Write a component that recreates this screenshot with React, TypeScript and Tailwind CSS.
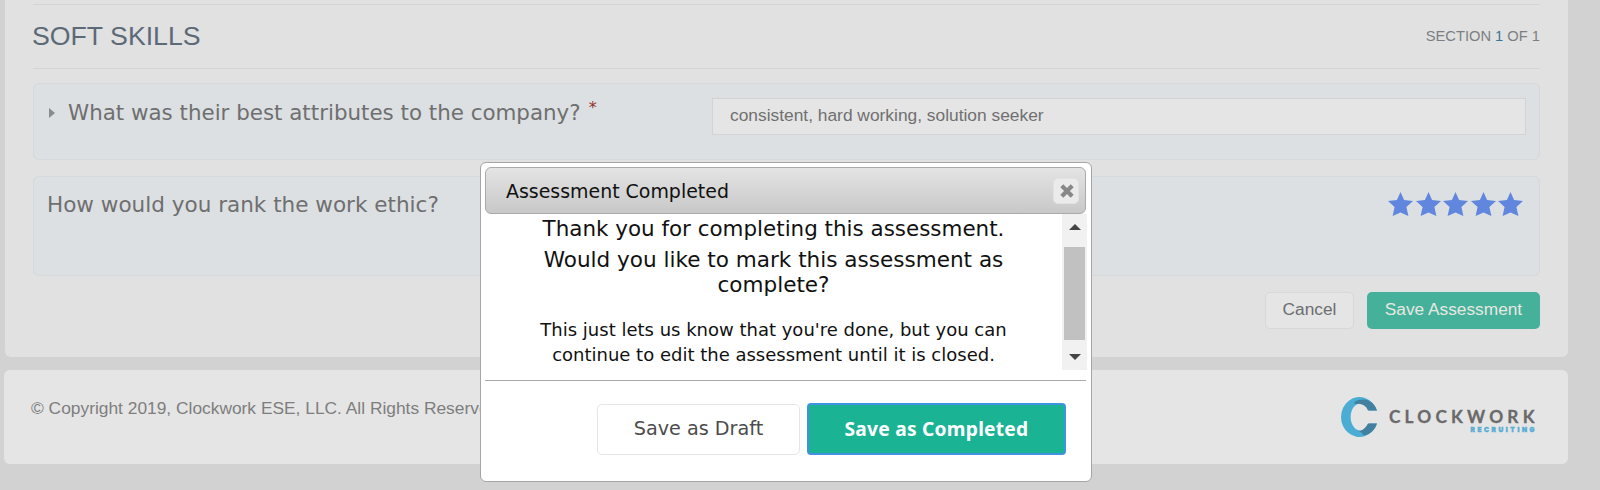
import type { ReactNode } from "react";

const Star = () => (
  <svg viewBox="0 0 25 24" className="h-6 w-[25px]" fill="#6086de">
    <path d="M12.500 0l3.600 8.100 8.900.9-6.600 6 2 9-7.900-3.400-7.900 3.400 2-9L0 9l8.900-.9z" />
  </svg>
);

const Logo = () => (
  <svg width="196" height="42" viewBox="0 0 196 42">
    <path
      d="M37.500 14.500A18.500 20 0 1 0 37.500 27.500L29.500 27.500A9.800 13.500 0 1 1 29.500 14.500Z"
      fill="#4bacd4"
      transform="translate(.5)"
    />
    <path d="M15.500 6C20 3 25.500 3 29.500 4.500C33.500 6.500 36.500 10 38 14.500L29 14.500C27 9.500 22.500 7 15.500 8Z" fill="#41809f" />
    <path
      d="M38 27.500C35.500 34.500 31 38.500 24.500 39.500C24 37.500 22 36 20 35.500C24 34 27 31.500 29 27.500Z"
      fill="#41809f"
    />
    <text
      x="50"
      y="26.500"
      fontFamily="Lato, sans-serif"
      fontSize="17.300"
      fontWeight="700"
      textLength="145.500"
      fill="#6a6a6a"
      stroke="#6a6a6a"
      strokeWidth="0.300"
    >
      CLOCKWORK
    </text>
    <text
      x="131.500"
      y="35.500"
      fontFamily="Inter, sans-serif"
      fontSize="6.500"
      fontWeight="900"
      textLength="64"
      fill="#55add3"
      stroke="#55add3"
      strokeWidth="0.400"
    >
      RECRUITING
    </text>
  </svg>
);

const Question = ({ className, children }: { className: string; children: ReactNode }) => (
  <div
    className={`flex items-start justify-between rounded-md border border-[#d3d9dc] bg-[#dce0e3] pr-[13px] pl-[13px] ${className}`}
  >
    {children}
  </div>
);

const Dialog = () => (
  <div className="absolute top-[162px] left-[480px] flex h-80 w-[612px] flex-col rounded-md border border-[#a5a5a5] bg-white py-1 pr-[5px] pl-1 font-['DejaVu_Sans',sans-serif] text-[#111]">
    <div className="flex h-[47px] shrink-0 items-center justify-between rounded-md border border-[#aaa] bg-linear-to-b from-[#e4e4e4] to-[#c8c8c8] pr-1.5 pl-5">
      <h2 className="text-[18.950px] leading-6">Assessment Completed</h2>
      <button className="flex h-[26px] w-[26px] items-center justify-center rounded-[5px] border border-[#e2e2e2] bg-[#ebebeb]">
        <svg width="14" height="14" viewBox="0 0 14 14" stroke="#888" strokeWidth="4.200" className="ml-0.5">
          <path d="M1.800 1.800l10.400 10.400M12.200 1.800L1.800 12.200" />
        </svg>
      </button>
    </div>

    <div className="-mr-px flex h-[156px] shrink-0">
      <div className="flex-1 overflow-hidden pt-[3px] text-center">
        <p className="text-[21.450px] leading-6">Thank you for completing this assessment.</p>
        <p className="mx-auto mt-1.5 w-[480px] text-[21.550px] leading-[25px]">
          Would you like to mark this assessment as complete?
        </p>
        <p className="mx-auto mt-5 w-[480px] text-[18px] leading-[25px]">
          This just lets us know that you're done, but you can continue to edit the assessment until it is closed.
        </p>
      </div>
      <div className="flex w-[25px] flex-col items-center bg-[#f1f1f1] pt-2.5">
        <svg width="12" height="6" viewBox="0 0 12 6" fill="#444">
          <path d="M0 6l6-6 6 6z" />
        </svg>
        <div className="mt-[17px] mb-3.5 h-[93px] w-[21px] bg-[#c1c1c1]" />
        <svg width="12" height="6" viewBox="0 0 12 6" fill="#444">
          <path d="M0 0h12L6 6z" />
        </svg>
      </div>
    </div>

    <div className="mt-2.5 flex justify-end gap-[7px] border-t border-[#aaa] pt-[22px] pr-5">
      <button className="mt-px h-[51px] w-[203px] rounded-[5px] border border-[#e3e6e6] bg-white text-[19.200px] text-[#4c4c4c]">
        Save as Draft
      </button>
      <button className="h-[52px] w-[259px] rounded border-2 border-[#3f93e0] bg-[#1ab394] font-['Noto_Sans',sans-serif] text-[19.200px] font-bold tracking-[0.240px] text-white">
        Save as Completed
      </button>
    </div>
  </div>
);

const App = () => {
  return (
    <div className="relative h-[490px] w-[1600px] overflow-hidden bg-[#d2d2d2] font-['Liberation_Sans',sans-serif]">
      <main className="ml-[5px] h-[357px] w-[1563px] rounded-b-md bg-[#e1e1e1] pt-1 pr-7 pl-7">
        <div className="flex h-[65px] items-center justify-between border-y border-[#d3d4d5]">
          <h1 className="-ml-px text-[26.700px] text-[#5c6a78]">SOFT SKILLS</h1>
          <span className="text-[14.700px] text-[#7b7f83]">
            SECTION <span className="text-[#35779a]">1</span> OF 1
          </span>
        </div>

        <Question className="mt-3.5 h-[77px] pt-3.5">
          <div className="flex items-center font-['DejaVu_Sans',sans-serif] text-[21.400px] leading-[29px] text-[#6f6f6f]">
            <svg width="6" height="10" viewBox="0 0 6 10" fill="#8b8b8b" className="mr-[13px] ml-0.5">
              <path d="M0 0l6 5-6 5z" />
            </svg>
            What was their best attributes to the company?
            <sup className="top-[-5px] ml-2 text-base leading-none text-[#96341f]">*</sup>
          </div>
          <div className="flex h-[37px] w-[814px] items-center border border-[#d0d4d7] bg-[#e5e5e5] pb-0.5 pl-[17px] text-[17.370px] text-[#707070]">
            consistent, hard working, solution seeker
          </div>
        </Question>

        <Question className="mt-4 h-[100px] pt-3.5">
          <span className="font-['DejaVu_Sans',sans-serif] text-[21.540px] leading-7 text-[#6f6f6f]">
            How would you rank the work ethic?
          </span>
          <div className="mt-px mr-[3px] flex gap-[2.400px]">
            <Star />
            <Star />
            <Star />
            <Star />
            <Star />
          </div>
        </Question>

        <div className="mt-4 flex justify-end gap-[13px] text-[17.300px]">
          <button className="h-[37px] w-[89px] rounded-[5px] border border-[#d6d8d9] bg-[#e5e5e5] pb-0.5 text-[#6b6e72]">
            Cancel
          </button>
          <button className="h-[37px] w-[173px] rounded-[5px] bg-[#45b19b] pb-0.5 text-[#e8e8e0]">
            Save Assessment
          </button>
        </div>
      </main>

      <footer className="mt-[13px] ml-1 flex h-[94px] w-[1564px] items-start justify-between rounded-md bg-[#e5e5e5] pr-[33px] pl-[27px]">
        <p className="mt-[25px] text-[17.370px] text-[#7e7e7e]">
          © Copyright 2019, Clockwork ESE, LLC. All Rights Reserved
        </p>
        <div className="mt-[26px]">
          <Logo />
        </div>
      </footer>

      <Dialog />
    </div>
  );
};

export default App;
